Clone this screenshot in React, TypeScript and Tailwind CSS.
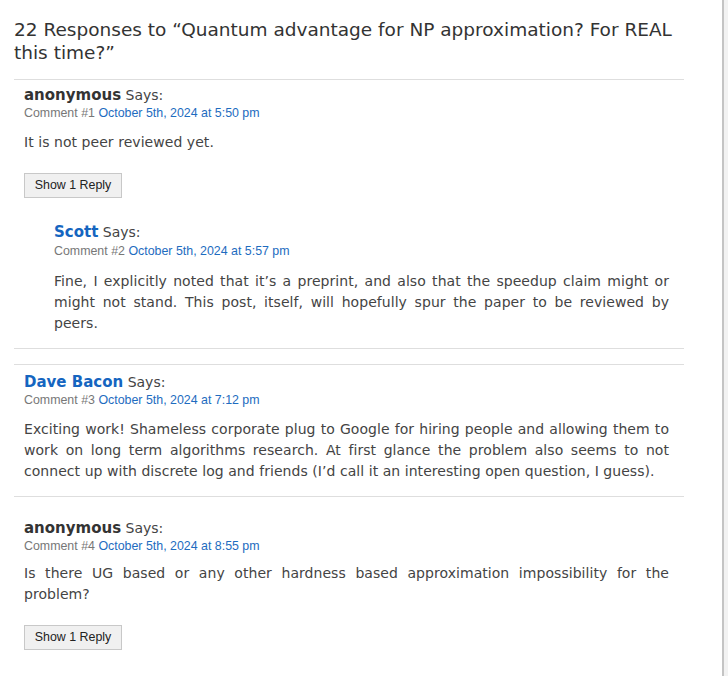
const body = "font-['DejaVu_Sans',Verdana,sans-serif]";
const arial = "font-['Liberation_Sans',Arial,sans-serif]";

function Header({ name, link, num, date, gap = "mt-[1px]" }: { name: string; link?: boolean; num: number; date: string; gap?: string }) {
  return (
    <div>
      <div className={`${body} leading-[20px]`}>
        <span className={`text-[15px] font-bold ${link ? "text-[#1565c0]" : "text-[#333]"}`}>{name}</span>
        <span className="text-[14px] text-[#444]"> Says:</span>
      </div>
      <div className={`${arial} text-[12.4px] leading-[14px] ${gap}`}>
        <span className="text-[#777]">Comment #{num} </span>
        <span className="text-[#1e6cc0]">{date}</span>
      </div>
    </div>
  );
}

function Text({ children, top = "mt-[12px]" }: { children: React.ReactNode; top?: string }) {
  return (
    <p className={`${body} text-[14px] leading-[21px] tracking-[0.05px] text-[#444] text-justify ${top}`}>{children}</p>
  );
}

function ReplyButton() {
  return (
    <button className={`${arial} mt-[20px] h-[25px] w-[98px] border border-[#c8c8c8] bg-[#f0f0f0] text-[12.4px] text-[#222]`}>
      Show 1 Reply
    </button>
  );
}

export default function App() {
  return (
    <div className="flex min-h-[676px] bg-white">
      <div className="w-[724px] border-r-2 border-[#c4c4c4] pl-[14px]">
        <div className="w-[670px]">
          <h2 className={`${body} text-[18.5px] leading-[23px] text-[#333] pt-[18px] pb-[15px]`}>
            22 Responses to “Quantum advantage for NP approximation? For REAL this time?”
          </h2>

          {/* comment 1 + reply */}
          <div className="border-t border-b border-[#dedede] pl-[10px] pr-[15px] pt-[5px] pb-[14px]">
            <Header name="anonymous" num={1} date="October 5th, 2024 at 5:50 pm" />
            <Text>It is not peer reviewed yet.</Text>
            <ReplyButton />

            <div className="ml-[30px] mt-[24px]">
              <Header name="Scott" link num={2} date="October 5th, 2024 at 5:57 pm" gap="mt-[2px]" />
              <Text top="mt-[13px]">
                Fine, I explicitly noted that it’s a preprint, and also that the speedup claim might or might not stand. This
                post, itself, will hopefully spur the paper to be reviewed by peers.
              </Text>
            </div>
          </div>

          {/* comment 3 */}
          <div className="mt-[15px] border-t border-b border-[#dedede] pl-[10px] pr-[15px] pt-[7px] pb-[14px]">
            <Header name="Dave Bacon" link num={3} date="October 5th, 2024 at 7:12 pm" />
            <Text>
              Exciting work! Shameless corporate plug to Google for hiring people and allowing them to work on long term
              algorithms research. At first glance the problem also seems to not connect up with discrete log and friends
              (I’d call it an interesting open question, I guess).
            </Text>
          </div>

          {/* comment 4 */}
          <div className="pl-[10px] pr-[15px] pt-[21px] pb-[20px]">
            <Header name="anonymous" num={4} date="October 5th, 2024 at 8:55 pm" />
            <Text top="mt-[10px]">
              Is there UG based or any other hardness based approximation impossibility for the problem?
            </Text>
            <ReplyButton />
          </div>
        </div>
      </div>
      <div className="flex-1 bg-[#f2f2f2]" />
    </div>
  );
}
